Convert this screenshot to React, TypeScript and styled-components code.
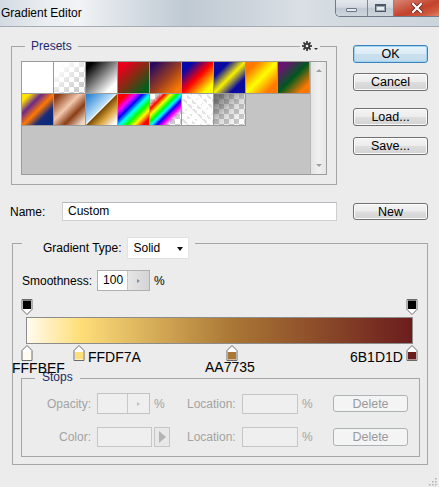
import React from 'react';
import styled, { createGlobalStyle } from 'styled-components';

const GlobalStyle = createGlobalStyle`
  html, body { margin: 0; padding: 0; background: #ececec; }
  body { font-family: "Liberation Sans", Arial, sans-serif; font-size: 12px; color: #000; }
  * { box-sizing: border-box; }
`;

const Window = styled.div`
  position: relative;
  width: 439px;
  height: 487px;
  overflow: hidden;
  background: #ececec;
`;

/* ---------- title bar ---------- */
const TitleBar = styled.div`
  height: 27px;
  display: flex;
  justify-content: space-between;
  align-items: flex-start;
  border-bottom: 1px solid #a3acb5;
  background: linear-gradient(90deg, #d3dae1 0%, #e9edf1 10%, #f1f3f5 18%, #d6dde3 30%, #c0cad3 42%, #cbd3da 55%, #d9dfe4 68%, #d2d9df 80%, #ccd4db 100%);
`;

const TitleText = styled.div`
  padding-left: 1px;
  line-height: 26px;
  font-size: 12px;
  color: #000;
`;

const Controls = styled.div`
  display: flex;
  height: 17px;
  border-left: 1px solid #6e7989;
  border-bottom: 1px solid #6e7989;
  border-radius: 0 0 0 5px;
  overflow: hidden;
`;

const CtrlBtn = styled.div<{ $w: number; $close?: boolean }>`
  width: ${p => p.$w}px;
  height: 100%;
  display: flex;
  align-items: center;
  justify-content: center;
  background: ${p =>
    p.$close
      ? 'linear-gradient(160deg, #d98877 0%, #cb5a45 35%, #c3422c 55%, #cf5a3e 80%, #e0826a 100%)'
      : 'linear-gradient(#e3e8ed 0%, #d4dae1 45%, #c1cad3 52%, #cdd5dc 100%)'};
  & + & { border-left: 1px solid #7d8897; }
`;

const MinGlyph = styled.span`
  width: 11px;
  height: 4px;
  margin-top: 4px;
  border: 1px solid #6a7584;
  border-radius: 1px;
  background: #e6eaee;
`;

const MaxGlyph = styled.span`
  width: 11px;
  height: 8px;
  border: 1px solid #4d5866;
  border-top-width: 2px;
  background: #e9edf0;
  box-shadow: inset 0 0 0 1px #9aa4b0;
`;

/* ---------- generic group box ---------- */
const GroupBox = styled.div<{ $w: number; $h: number }>`
  position: relative;
  width: ${p => p.$w}px;
  height: ${p => p.$h}px;
  border: 1px solid #a6a6a6;
`;

const GroupTitle = styled.span<{ $left: number; $top: number; $pad: number }>`
  position: absolute;
  top: ${p => p.$top}px;
  left: ${p => p.$left}px;
  padding: 0 ${p => p.$pad}px;
  line-height: 14px;
  background: #ececec;
  color: #1b2a6b;
  font-size: 12px;
`;

/* ---------- top row ---------- */
const TopRow = styled.div`
  display: flex;
  align-items: flex-start;
  padding: 19px 0 0 11px;
`;

const GearSlot = styled.span`
  position: absolute;
  top: -6px;
  right: 16px;
  height: 10px;
  padding: 0 2px;
  display: flex;
  align-items: center;
  gap: 2px;
  background: #ececec;
`;

const TinyArrow = styled.span`
  width: 0;
  height: 0;
  margin-top: 5px;
  border-left: 2px solid transparent;
  border-right: 2px solid transparent;
  border-top: 2px solid #333;
`;

const SwatchArea = styled.div`
  display: flex;
  margin: 14px 0 0 9px;
  width: 306px;
  height: 114px;
  border: 1px solid #9c9c9c;
  background: #c4c4c4;
`;

const SwatchGrid = styled.div`
  display: grid;
  grid-template-columns: repeat(9, 31px);
  grid-auto-rows: 31px;
  gap: 1px;
  align-content: start;
  width: 288px;
`;

const checker =
  'linear-gradient(45deg, #cbcbcb 25%, transparent 25%, transparent 75%, #cbcbcb 75%), linear-gradient(45deg, #cbcbcb 25%, transparent 25%, transparent 75%, #cbcbcb 75%)';

const Swatch = styled.div<{ $bg: string; $checker?: boolean }>`
  box-shadow: 0 0 0 1px #9a9a9a;
  background-color: #fff;
  background-image: ${p => (p.$checker ? `${p.$bg}, ${checker}` : p.$bg)};
  background-size: ${p => (p.$checker ? '100% 100%, 10px 10px, 10px 10px' : '100% 100%')};
  background-position: ${p => (p.$checker ? '0 0, 0 0, 5px 5px' : '0 0')};
`;

const ScrollBar = styled.div`
  flex: 1;
  position: relative;
  z-index: 1;
  display: flex;
  flex-direction: column;
  justify-content: space-between;
  align-items: center;
  padding: 7px 0 7px;
  border-left: 1px solid #b4b4b4;
  background: linear-gradient(90deg, #e4e4e4, #f0f0f0 50%, #e6e6e6);
`;

const ScrollArrow = styled.span<{ $up?: boolean }>`
  width: 0;
  height: 0;
  border-left: 3px solid transparent;
  border-right: 3px solid transparent;
  ${p => (p.$up ? 'border-bottom: 3px solid #a0a0a0;' : 'border-top: 3px solid #a0a0a0;')}
`;

const ButtonColumn = styled.div`
  display: flex;
  flex-direction: column;
  margin-left: 16px;
  margin-top: -1px;
`;

const DialogButton = styled.button<{ $primary?: boolean; $mt?: number; $h?: number }>`
  width: 75px;
  height: ${p => p.$h ?? 18}px;
  margin: ${p => p.$mt ?? 0}px 0 0 0;
  padding: 0;
  border: 1px solid ${p => (p.$primary ? '#3c84bd' : '#707070')};
  border-radius: 3px;
  background: ${p =>
    p.$primary
      ? 'linear-gradient(#eaf4fa 0%, #dcebf5 48%, #cbe0ee 52%, #c2dbec 100%)'
      : 'linear-gradient(#f4f4f4 0%, #ececec 48%, #dedede 52%, #d2d2d2 100%)'};
  box-shadow: ${p => (p.$primary ? 'inset 0 0 0 1px #9fd3f2' : 'inset 0 0 0 1px #fbfbfb')};
  font-family: "Liberation Sans", Arial, sans-serif;
  font-size: 12.5px;
  line-height: 16px;
  color: #000;
`;

const DisabledButton = styled.button<{ $h: number }>`
  width: 75px;
  height: ${p => p.$h}px;
  padding: 0;
  border: 1px solid #adb2b5;
  border-radius: 3px;
  background: #f4f4f4;
  font-family: "Liberation Sans", Arial, sans-serif;
  font-size: 12.5px;
  color: #9a9a9a;
`;

/* ---------- name row ---------- */
const NameRow = styled.div`
  display: flex;
  align-items: center;
  height: 19px;
  margin-top: 17px;
  padding-left: 10px;
`;

const NameLabel = styled.span`
  width: 52px;
`;

const TextField = styled.div`
  width: 275px;
  height: 19px;
  padding-left: 5px;
  line-height: 17px;
  background: #fff;
  border: 1px solid #cfcfcf;
  border-top-color: #b5b8bd;
`;

/* ---------- gradient group ---------- */
const GradientGroup = styled(GroupBox)`
  margin: 22px 0 0 12px;
`;

const Legend = styled.div`
  position: absolute;
  top: -7px;
  left: 9px;
  display: flex;
  align-items: center;
  padding: 0 6px 0 21px;
  background: #ececec;
`;

const SelectBox = styled.div`
  position: relative;
  width: 62px;
  height: 22px;
  margin-left: 5px;
  padding-left: 6px;
  display: flex;
  align-items: center;
  background: #fff;
  border: 1px solid #e2e2e2;
`;

const SelectArrow = styled.span`
  position: absolute;
  right: 5px;
  top: 9px;
  width: 0;
  height: 0;
  border-left: 3.5px solid transparent;
  border-right: 3.5px solid transparent;
  border-top: 4px solid #111;
`;

const SmoothRow = styled.div`
  display: flex;
  align-items: center;
  margin-top: 26px;
  padding-left: 9px;
  height: 21px;
`;

const SpinBox = styled.div<{ $disabled?: boolean }>`
  display: flex;
  width: 53px;
  height: 21px;
  margin-left: ${p => (p.$disabled ? 0 : 5)}px;
  border: 1px solid ${p => (p.$disabled ? '#c3c3c3' : '#b0b0b0')};
  background: ${p => (p.$disabled ? '#efefef' : '#fff')};
`;

const SpinValue = styled.div`
  width: 30px;
  padding-left: 5px;
  line-height: 19px;
  border-right: 1px solid #c8c8c8;
`;

const SpinButton = styled.div<{ $disabled?: boolean }>`
  flex: 1;
  display: flex;
  align-items: center;
  justify-content: center;
  background: ${p => (p.$disabled ? '#efefef' : 'linear-gradient(90deg, #e6e6e6, #d4d4d4)')};
`;

const SmallTri = styled.span<{ $c: string }>`
  width: 0;
  height: 0;
  border-top: 2.5px solid transparent;
  border-bottom: 2.5px solid transparent;
  border-left: 3px solid ${p => p.$c};
`;

const Percent = styled.span<{ $ml: number; $w?: number; $disabled?: boolean }>`
  margin-left: ${p => p.$ml}px;
  ${p => (p.$w ? `width: ${p.$w}px;` : '')}
  color: ${p => (p.$disabled ? '#a3a3a3' : '#000')};
`;

/* ---------- gradient editor ---------- */
const EditorArea = styled.div`
  position: relative;
  width: 387px;
  margin: 8px 0 0 13px;
`;

const StopTrack = styled.div<{ $mt: number }>`
  position: relative;
  height: 16px;
  margin: ${p => p.$mt}px 1px 0;
`;

const StopMarker = styled.svg`
  position: absolute;
  top: 0;
  transform: translateX(-50%);
  overflow: visible;
`;

const GradientBar = styled.div<{ $bg: string }>`
  height: 27px;
  margin-top: 2px;
  border: 1px solid #8c8c8c;
  background: ${p => p.$bg};
`;

const HexNote = styled.span<{ $x: number; $y: number }>`
  position: absolute;
  left: ${p => p.$x}px;
  top: ${p => p.$y}px;
  z-index: 2;
  font-family: "Liberation Sans", Arial, sans-serif;
  font-size: 14px;
  line-height: 16px;
  color: #000;
  white-space: nowrap;
`;

/* ---------- stops group ---------- */
const StopsGroup = styled(GroupBox)`
  margin: 17px 0 0 8px;
`;

const StopsRow = styled.div<{ $mt: number }>`
  display: flex;
  align-items: center;
  height: 21px;
  margin-top: ${p => p.$mt}px;
`;

const DimLabel = styled.span<{ $w: number; $right?: boolean; $ml?: number }>`
  width: ${p => p.$w}px;
  margin-left: ${p => p.$ml ?? 0}px;
  text-align: ${p => (p.$right ? 'right' : 'left')};
  color: #a3a3a3;
  white-space: nowrap;
`;

const Cell = styled.div`
  display: flex;
  align-items: center;
  width: 84px;
  margin-left: 6px;
`;

const DimField = styled.div<{ $w: number; $h: number; $ml?: number }>`
  width: ${p => p.$w}px;
  height: ${p => p.$h}px;
  margin-left: ${p => p.$ml ?? 0}px;
  border: 1px solid #c6c6c6;
  background: #efefef;
`;

const ArrowButton = styled.div`
  width: 16px;
  height: 20px;
  margin-left: 2px;
  display: flex;
  align-items: center;
  justify-content: center;
  border: 1px solid #c6c6c6;
  background: #e8e8e8;
`;

const BigTri = styled.span`
  width: 0;
  height: 0;
  border-top: 6px solid transparent;
  border-bottom: 6px solid transparent;
  border-left: 7px solid #b4b4b4;
`;

const Grip = styled.svg`
  position: absolute;
  right: 2px;
  bottom: 1px;
`;

/* ---------- data ---------- */
const swatches: { bg: string; checker?: boolean }[] = [
  { bg: 'linear-gradient(#fff, #fff)' },
  { bg: 'linear-gradient(135deg, #fff 15%, rgba(255,255,255,0) 85%)', checker: true },
  { bg: 'linear-gradient(135deg, #000 12%, #fff 82%)' },
  { bg: 'linear-gradient(135deg, #e8001c 15%, #7a3012 52%, #00601c 88%)' },
  { bg: 'linear-gradient(135deg, #2a0a5e 10%, #a0401e 55%, #ff7c00 90%)' },
  { bg: 'linear-gradient(135deg, #0808a8 18%, #ff0000 50%, #ffff00 85%)' },
  { bg: 'linear-gradient(135deg, #0a0aa0 24%, #f8f000 50%, #0a0aa0 76%)' },
  { bg: 'linear-gradient(135deg, #ff7800 18%, #ffff00 50%, #ff7800 82%)' },
  { bg: 'linear-gradient(135deg, #6a1472 15%, #00581e 50%, #ff7800 85%)' },
  { bg: 'linear-gradient(135deg, #ffe400 12%, #6a2a8a 32%, #ff7800 52%, #1a2a7a 72%, #0a2a7a 90%)' },
  { bg: 'linear-gradient(135deg, #8a3a12 8%, #f2c8ae 42%, #8a3e16 66%, #f0d8c6 92%)' },
  { bg: 'linear-gradient(135deg, #2a84d4 5%, #bfe2fb 46%, #fff 49%, #7a4a08 51%, #d8a23a 70%, #fff 94%)' },
  { bg: 'linear-gradient(135deg, #ff0000 14%, #ff00ff 28%, #0000ff 40%, #00ffff 52%, #00ff00 64%, #ffff00 76%, #ff0000 90%)' },
  { bg: 'linear-gradient(135deg, rgba(255,0,0,0) 14%, #ff0000 24%, #ffff00 34%, #00ff00 44%, #00ffff 52%, #0000ff 60%, #ff00ff 70%, rgba(255,0,255,0) 80%)', checker: true },
  { bg: 'repeating-linear-gradient(45deg, rgba(255,255,255,0.95) 0 3px, rgba(255,255,255,0.45) 3px 5px)', checker: true },
  { bg: 'linear-gradient(135deg, rgba(60,60,60,0.75) 5%, rgba(120,120,120,0.3) 50%, rgba(255,255,255,0) 90%)', checker: true },
];

const colorStops = [
  { pos: 0, color: '#FFFBEF' },
  { pos: 13.5, color: '#FFDF7A' },
  { pos: 53.2, color: '#AA7735' },
  { pos: 100, color: '#6B1D1D' },
];

const opacityStops = [0, 100];

const barBg = `linear-gradient(90deg, ${colorStops.map(s => `${s.color} ${s.pos}%`).join(', ')})`;

const notes = [
  { text: 'FFFBEF', x: -14, y: 61 },
  { text: 'FFDF7A', x: 62, y: 50 },
  { text: 'AA7735', x: 179, y: 60 },
  { text: '6B1D1D', x: 324, y: 50 },
];

function Gear() {
  const teeth = Array.from({ length: 8 }, (_, i) => i * 45);
  return (
    <svg width="10" height="10" viewBox="0 0 10 10">
      {teeth.map(a => (
        <rect key={a} x="4.1" y="0" width="1.8" height="2.6" fill="#3a3a3a" transform={`rotate(${a} 5 5)`} />
      ))}
      <circle cx="5" cy="5" r="3.3" fill="#3a3a3a" />
      <circle cx="5" cy="5" r="1.3" fill="#ececec" />
    </svg>
  );
}

function CloseGlyph() {
  return (
    <svg width="12" height="10" viewBox="0 0 12 10">
      <path d="M2 1 L10 9 M10 1 L2 9" stroke="#5a2018" strokeWidth="3.6" strokeLinecap="square" />
      <path d="M2 1 L10 9 M10 1 L2 9" stroke="#fff" strokeWidth="2.2" strokeLinecap="square" />
    </svg>
  );
}

export default function App() {
  return (
    <>
      <GlobalStyle />
      <Window>
        <TitleBar>
          <TitleText>Gradient Editor</TitleText>
          <Controls>
            <CtrlBtn $w={31}><MinGlyph /></CtrlBtn>
            <CtrlBtn $w={26}><MaxGlyph /></CtrlBtn>
            <CtrlBtn $w={46} $close><CloseGlyph /></CtrlBtn>
          </Controls>
        </TitleBar>

        <TopRow>
          <GroupBox $w={326} $h={139}>
            <GroupTitle $left={13} $top={-8} $pad={6}>Presets</GroupTitle>
            <GearSlot>
              <Gear />
              <TinyArrow />
            </GearSlot>
            <SwatchArea>
              <SwatchGrid>
                {swatches.map((s, i) => (
                  <Swatch key={i} $bg={s.bg} $checker={s.checker} />
                ))}
              </SwatchGrid>
              <ScrollBar>
                <ScrollArrow $up />
                <ScrollArrow />
              </ScrollBar>
            </SwatchArea>
          </GroupBox>
          <ButtonColumn>
            <DialogButton $primary>OK</DialogButton>
            <DialogButton $mt={10}>Cancel</DialogButton>
            <DialogButton $mt={17}>Load...</DialogButton>
            <DialogButton $mt={11}>Save...</DialogButton>
          </ButtonColumn>
        </TopRow>

        <NameRow>
          <NameLabel>Name:</NameLabel>
          <TextField>Custom</TextField>
          <DialogButton $h={17} style={{ marginLeft: 16 }}>New</DialogButton>
        </NameRow>

        <GradientGroup $w={416} $h={222}>
          <Legend>
            <span>Gradient Type:</span>
            <SelectBox>
              Solid
              <SelectArrow />
            </SelectBox>
          </Legend>

          <SmoothRow>
            <span>Smoothness:</span>
            <SpinBox>
              <SpinValue>100</SpinValue>
              <SpinButton><SmallTri $c="#7d90ab" /></SpinButton>
            </SpinBox>
            <Percent $ml={4}>%</Percent>
          </SmoothRow>

          <EditorArea>
            <StopTrack $mt={0}>
              {opacityStops.map(p => (
                <StopMarker key={p} width="11" height="16" viewBox="0 0 11 16" style={{ left: `${p}%` }}>
                  <path d="M0.5 0.5 H10.5 V10.5 L5.5 15.5 L0.5 10.5 Z" fill="#fff" stroke="#6a6a6a" />
                  <rect x="1.5" y="1.5" width="8" height="8.5" fill="#000" />
                </StopMarker>
              ))}
            </StopTrack>
            <GradientBar $bg={barBg} />
            <StopTrack $mt={1}>
              {colorStops.map(s => (
                <StopMarker key={s.pos} width="11" height="16" viewBox="0 0 11 16" style={{ left: `${s.pos}%` }}>
                  <path d="M5.5 0.5 L10.5 5.5 V15.5 H0.5 V5.5 Z" fill="#fff" stroke="#6a6a6a" />
                  <rect x="1.5" y="7" width="8" height="7.5" fill={s.color} />
                </StopMarker>
              ))}
            </StopTrack>
            {notes.map(n => (
              <HexNote key={n.text} $x={n.x} $y={n.y}>{n.text}</HexNote>
            ))}
          </EditorArea>

          <StopsGroup $w={399} $h={79}>
            <GroupTitle $left={13} $top={-9} $pad={7}>Stops</GroupTitle>
            <StopsRow $mt={14}>
              <DimLabel $w={69} $right>Opacity:</DimLabel>
              <Cell>
                <SpinBox $disabled>
                  <SpinValue />
                  <SpinButton $disabled><SmallTri $c="#c2c2c2" /></SpinButton>
                </SpinBox>
                <Percent $ml={4} $disabled>%</Percent>
              </Cell>
              <DimLabel $w={55} $ml={6}>Location:</DimLabel>
              <DimField $w={56} $h={20} />
              <Percent $ml={4} $w={31} $disabled>%</Percent>
              <DisabledButton $h={17}>Delete</DisabledButton>
            </StopsRow>
            <StopsRow $mt={12}>
              <DimLabel $w={69} $right>Color:</DimLabel>
              <Cell>
                <DimField $w={55} $h={20} />
                <ArrowButton><BigTri /></ArrowButton>
              </Cell>
              <DimLabel $w={55} $ml={6}>Location:</DimLabel>
              <DimField $w={56} $h={20} />
              <Percent $ml={4} $w={31} $disabled>%</Percent>
              <DisabledButton $h={18}>Delete</DisabledButton>
            </StopsRow>
          </StopsGroup>
        </GradientGroup>

        <Grip width="8" height="8" viewBox="0 0 8 8">
          {[[6, 0], [6, 3], [3, 3], [6, 6], [3, 6], [0, 6]].map(([x, y]) => (
            <rect key={`${x}-${y}`} x={x} y={y} width="1.5" height="1.5" fill="#b0b0b0" />
          ))}
        </Grip>
      </Window>
    </>
  );
}
